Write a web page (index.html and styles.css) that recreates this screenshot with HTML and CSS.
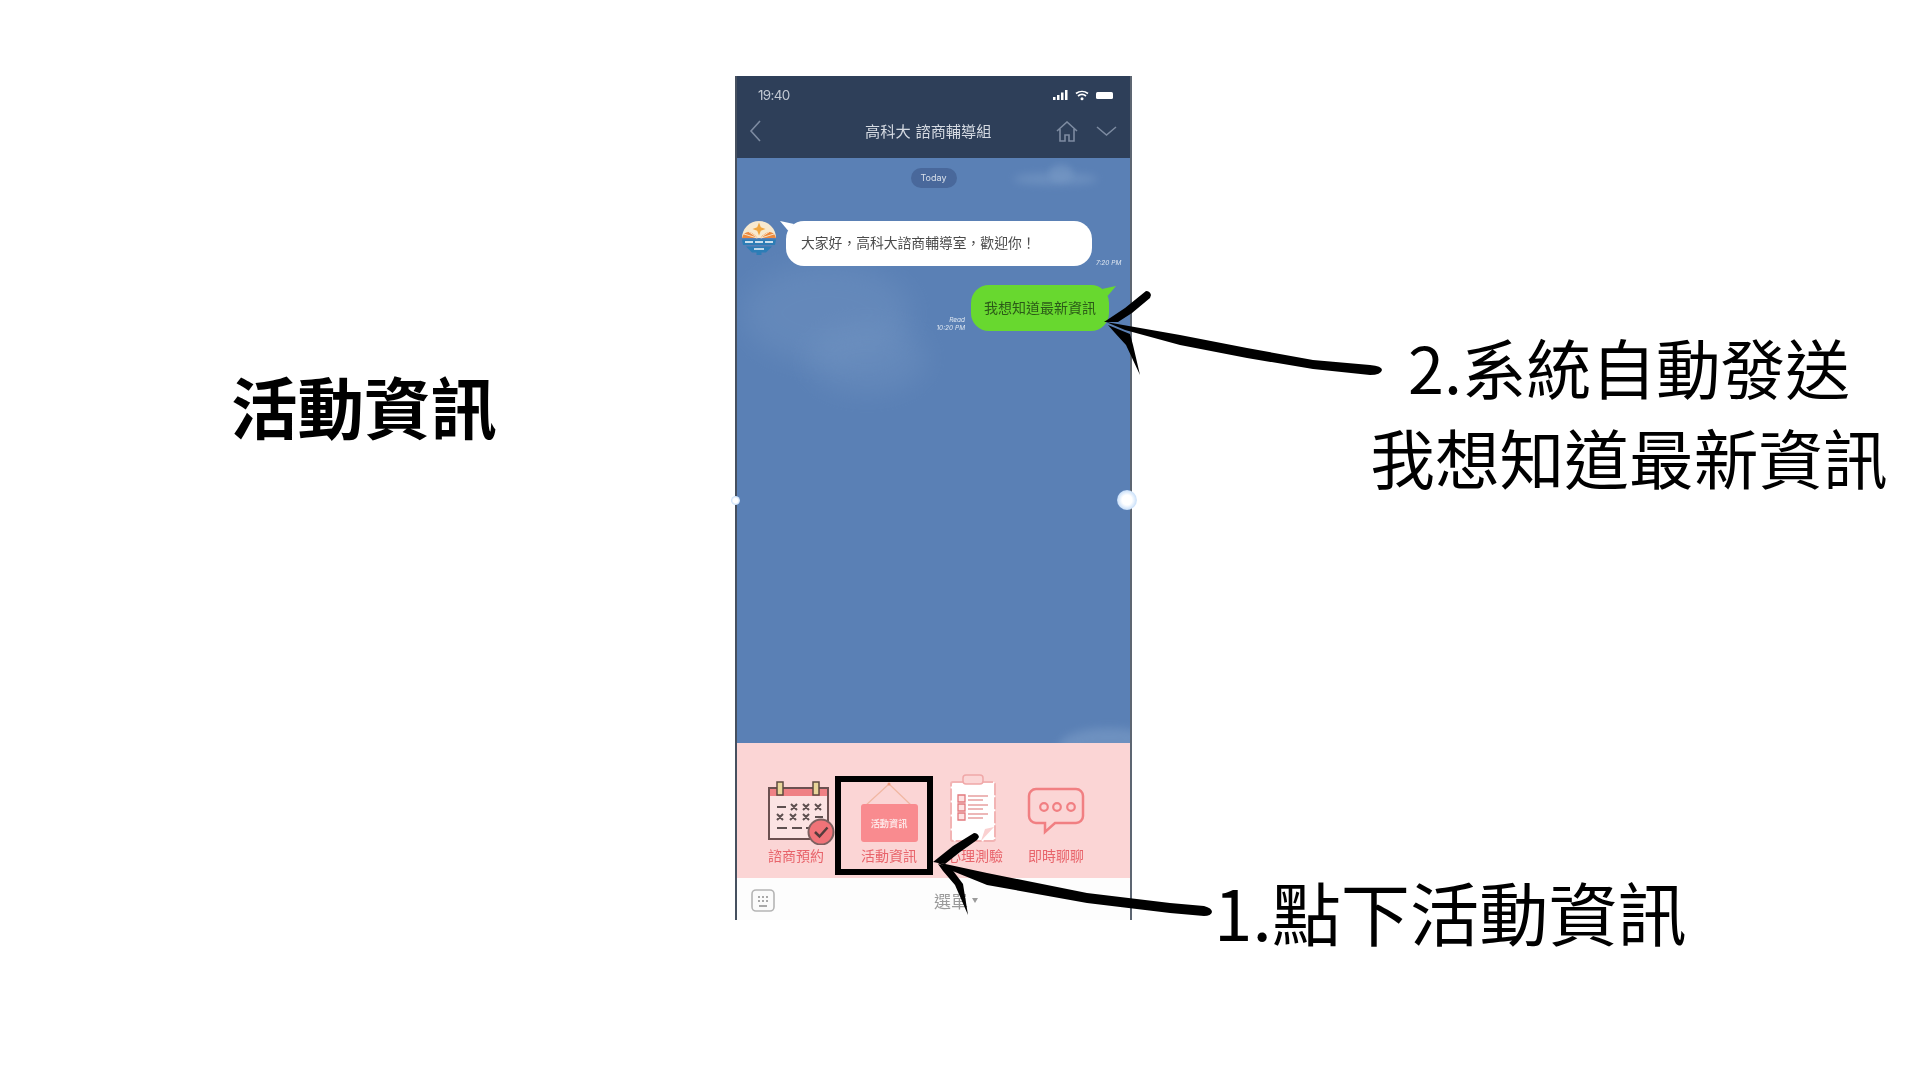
FILE: index.html
```html
<!DOCTYPE html>
<html lang="zh-Hant">
<head>
<meta charset="utf-8">
<title>活動資訊</title>
<link rel="stylesheet" href="styles.css">
</head>
<body>
<main class="slide">
  <h1 class="heading">活動資訊</h1>

  <section class="phone">
    <div class="phone-inner">
      <header class="top">
        <div class="status">
          <span class="clock">19:40</span>
          <svg class="status-icons" width="66" height="12" viewBox="0 0 66 12">
            <g fill="#fff"><rect x="0" y="8" width="2.5" height="3"/><rect x="4" y="6" width="2.5" height="5"/><rect x="8" y="3.5" width="2.5" height="7.5"/><rect x="12" y="1" width="2.5" height="10"/></g>
            <path d="M23 4.500a10 10 0 0 1 12 0M25 7a6.500 6.500 0 0 1 8 0" fill="none" stroke="#fff" stroke-width="1.700"/>
            <circle cx="29" cy="9.800" r="1.500" fill="#fff"/>
            <rect x="43" y="3" width="17" height="7" rx="1.500" fill="#fff"/>
          </svg>
        </div>
        <div class="nav">
          <svg class="nav-back" width="13" height="24" viewBox="0 0 13 24"><path d="M11 2 2 12l9 10" fill="none" stroke="#7d8ba1" stroke-width="1.600"/></svg>
          <span class="nav-title">高科大 諮商輔導組</span>
          <svg class="nav-home" width="22" height="21" viewBox="0 0 22 21"><path d="M1 10 11 1l10 9M4 8v12h5v-6h4v6h5V8" fill="none" stroke="#7d8ba1" stroke-width="1.600"/></svg>
          <svg class="nav-more" width="21" height="11" viewBox="0 0 21 11"><path d="m1 1 9.500 8L20 1" fill="none" stroke="#7d8ba1" stroke-width="1.500"/></svg>
        </div>
      </header>

      <div class="chat">
        <i class="cloud cloud-a"></i><i class="cloud cloud-b"></i><i class="cloud cloud-c"></i><i class="cloud cloud-e"></i><i class="cloud cloud-d"></i>
        <div class="day"><span>Today</span></div>
        <div class="row-in">
          <svg class="avatar" width="36" height="36" viewBox="0 0 36 36">
            <path d="M1 17a17 17 0 0 1 34 0z" fill="#f7e9cf"/>
            <path d="M18 1.500l1.800 4.700 4.700 1.800-4.700 1.800L18 14.500l-1.800-4.700L11.500 8l4.700-1.800z" fill="#f0a63e"/>
            <path d="M1 17C3 9 10 9 16.500 16.500V17zM35 17c-2-8-9-8-15.500-.5V17z" fill="#ee8a3f"/>
            <path d="M3 13l13 4M33 13l-13 4M6 9.500l11 7.500M30 9.500 19 17" stroke="#f9e5c8" stroke-width="1"/>
            <path d="M1 18.500h34l-1 5.500H2z" fill="#2c7db6"/>
            <path d="M4 21h8M14 21h8M24 21h8" stroke="#fff" stroke-width="1.400"/>
            <path d="M5 25.500h26l-6 6H11z" fill="#2c7db6"/>
            <path d="M13 28h10" stroke="#fff" stroke-width="1.400"/>
            <rect x="15.500" y="31" width="5" height="3" fill="#2c7db6"/>
          </svg>
          <div class="bubble bubble-in">大家好，高科大諮商輔導室，歡迎你！</div>
          <span class="time time-in">7:20 PM</span>
        </div>
        <div class="row-out">
          <span class="time time-out">Read<br>10:20 PM</span>
          <div class="bubble bubble-out">我想知道最新資訊</div>
        </div>
      </div>

      <nav class="menu">
        <div class="item">
          <svg class="ico-cal" width="70" height="64" viewBox="0 0 70 64">
            <rect x="3" y="7" width="59" height="51" fill="#fbe3e3" stroke="#6b5050" stroke-width="2"/>
            <rect x="4" y="8" width="57" height="7" fill="#ef8185"/>
            <rect x="11" y="1" width="6" height="13" fill="#e9d69a" stroke="#5d4a40" stroke-width="1.500"/>
            <rect x="47" y="1" width="6" height="13" fill="#e9d69a" stroke="#5d4a40" stroke-width="1.500"/>
            <path d="M11 26h9M25 23l6 6m0-6-6 6M37 23l6 6m0-6-6 6M49 23l6 6m0-6-6 6M11 33l6 6m0-6-6 6M24 33l6 6m0-6-6 6M37 33l6 6m0-6-6 6M49 36h8M11 47h10M26 47h10M40 47h4" stroke="#5e5050" stroke-width="2" fill="none"/>
            <circle cx="55" cy="51" r="12.500" fill="#f07378" stroke="#7d6060" stroke-width="2"/>
            <path d="m49 51 4.500 4.500 8-9" fill="none" stroke="#543c3c" stroke-width="2.500"/>
          </svg>
          <span>諮商預約</span>
        </div>
        <div class="item">
          <svg width="60" height="64" viewBox="0 0 60 64">
            <path d="M30 3 6 25M30 3l23 22" stroke="#f1b7a2" stroke-width="1.200" fill="none"/>
            <circle cx="30" cy="3" r="1.500" fill="#ef9c7e"/>
            <rect x="2" y="23" width="57" height="38" rx="3" fill="#f98b8f"/>
            <text x="30" y="46" text-anchor="middle" class="sign-text">活動資訊</text>
          </svg>
          <span>活動資訊</span>
        </div>
        <div class="item">
          <svg class="ico-clip" width="50" height="72" viewBox="0 0 50 72">
            <rect x="3" y="9" width="44" height="59" rx="2" fill="#fff" stroke="#f2b4b4" stroke-width="2" stroke-dasharray="12 2"/>
            <rect x="15" y="2" width="20" height="9" rx="3" fill="#fbd6d6" stroke="#f0a8a8" stroke-width="1.500"/>
            <path d="M10 22h7v7h-7zM10 31h7v7h-7zM10 40h7v7h-7z" fill="#fde3e3" stroke="#e2797d" stroke-width="1.300"/>
            <path d="M20 23h20M20 27h15M20 32h20M20 36h15M20 41h20M20 45h15" stroke="#e8a0a0" stroke-width="1.300"/>
            <path d="M33 68l13-14-9 2z" fill="#fad1d1"/>
          </svg>
          <span>心理測驗</span>
        </div>
        <div class="item">
          <svg width="58" height="58" viewBox="0 0 58 58">
            <path d="M9 2h40a7 7 0 0 1 7 7v20a7 7 0 0 1-7 7H28L18 45V36H9a7 7 0 0 1-7-7V9a7 7 0 0 1 7-7z" fill="none" stroke="#f17f82" stroke-width="2.500"/>
            <circle cx="17" cy="20" r="3.800" fill="none" stroke="#f17f82" stroke-width="2.200"/>
            <circle cx="30" cy="20" r="3.800" fill="none" stroke="#f17f82" stroke-width="2.200"/>
            <circle cx="44" cy="20" r="3.800" fill="none" stroke="#f17f82" stroke-width="2.200"/>
          </svg>
          <span>即時聊聊</span>
        </div>
      </nav>

      <footer class="bar">
        <svg class="kbd" width="24" height="24" viewBox="0 0 24 24">
          <rect x="1" y="1" width="22" height="21" rx="4" fill="#fbfbfb" stroke="#b5b5b5" stroke-width="1.600"/>
          <path d="M7 8h2M11 8h2M15 8h2M7 12h2M11 12h2M15 12h2M8 17h8" stroke="#8e8e8e" stroke-width="1.500"/>
        </svg>
        <span class="bar-label">選單<i class="caret"></i></span>
      </footer>
    </div>
    <i class="knob knob-l"></i><i class="knob knob-r"></i>
  </section>

  <div class="box"></div>

  <svg class="ink" width="1920" height="1080" viewBox="0 0 1920 1080">
    <path d="M1106 322 1180 335 1247 348 1313 360 1370 365Q1382 366 1382 370 1381 375 1370 375L1313 369 1247 358 1180 345 1125 330Z"/>
    <path d="M1104 322 1125 308 1146 291Q1150 291 1151 295L1150 298 1132 313 1118 322Z"/>
    <path d="M1108 325 1130 334 1133 345 1140 375 1126 345 1115 333Z"/>
    <path d="M936 862 987 873 1087 893 1170 903 1204 906Q1212 908 1212 912 1211 916 1204 916L1170 913 1087 903 987 885 950 870Z"/>
    <path d="M933 862 953 846 974 833Q978 833 979 837L977 840 960 852 945 864Z"/>
    <path d="M938 864 951 868 963 884 968 915 955 885 943 871Z"/>
  </svg>

  <p class="note note-two">2.系統自動發送<br>我想知道最新資訊</p>
  <p class="note note-one">1.點下活動資訊</p>
</main>
</body>
</html>
```

FILE: styles.css
```css
* { box-sizing: border-box; }
html, body { margin: 0; padding: 0; background: #fff; }
body { width: 1920px; height: 1080px; overflow: hidden; font-family: "Noto Sans CJK TC", "Noto Sans", sans-serif; }
.slide { position: relative; width: 1920px; height: 1080px; }

.heading { position: absolute; left: 231px; top: 357px; margin: 0; font-size: 66.500px; line-height: 96px; font-weight: 700; color: #000; }
.note { position: absolute; margin: 0; font-size: 64.700px; color: #000; font-weight: 400; text-align: center; }
.note-two { left: 1369px; top: 321px; width: 520px; line-height: 90px; }
.note-one { left: 1214px; top: 863px; line-height: 96px; white-space: nowrap; font-size: 69.200px; }

.phone { position: absolute; left: 735px; top: 76px; width: 397px; height: 844px; }
.phone-inner { display: flex; flex-direction: column; width: 100%; height: 100%; border-left: 2px solid #46505f; border-right: 2px solid #5d6672; filter: blur(.6px); overflow: hidden; background: #5a80b5; }

.top { flex: none; height: 82px; background: #2e3f59; color: #fff; display: flex; flex-direction: column; padding: 0 12px 0 21px; }
.status { display: flex; align-items: center; justify-content: space-between; height: 36px; padding-top: 2px; }
.clock { font-family: "Inter", sans-serif; font-size: 13.500px; color: #c2c9d3; letter-spacing: -.7px; }
.status-icons { margin-right: -1px; }
.nav { position: relative; display: flex; align-items: center; height: 38px; }
.nav-back { margin-left: -9px; }
.nav-title { position: absolute; left: 107px; top: 7px; font-size: 15.200px; line-height: 22px; color: #d5dae2; white-space: nowrap; word-spacing: 1.500px; }
.nav-home { margin-left: auto; margin-right: 18px; }
.nav-more { margin-right: 1px; }

.chat { flex: none; height: 585px; position: relative; padding-top: 10px; background: #5a80b5; overflow: hidden; }
.cloud { position: absolute; display: block; border-radius: 50%; filter: blur(14px); background: #7b9cc7; }
.cloud-a { left: 5px; top: 105px; width: 170px; height: 100px; opacity: .3; }
.cloud-b { left: 70px; top: 165px; width: 120px; height: 70px; opacity: .3; }
.cloud-c { left: 276px; top: 15px; width: 85px; height: 12px; opacity: .55; filter: blur(4px); }
.cloud-e { left: 312px; top: 6px; width: 24px; height: 18px; opacity: .5; filter: blur(3px); }
.cloud-d { left: 322px; top: 570px; width: 100px; height: 36px; opacity: .6; filter: blur(4px); }

.day { position: relative; display: flex; justify-content: center; }
.day span { display: block; width: 46px; height: 20px; border-radius: 10px; background: #49689b; color: #d9e0ea; font-family: "Inter", sans-serif; font-size: 9px; line-height: 20px; text-align: center; }

.row-in { position: relative; display: flex; align-items: flex-start; margin-top: 33px; padding-left: 4px; }
.avatar { flex: none; }
.bubble { position: relative; font-size: 13.800px; line-height: 20px; white-space: nowrap; }
.bubble-in { width: 306px; height: 45px; margin-left: 9px; padding: 11px 15px; border-radius: 18px; background: #fff; color: #4b4b4b; }
.bubble-in::before { content: ""; position: absolute; left: -6px; top: 0; width: 14px; height: 10px; background: #fff; clip-path: polygon(0 0, 100% 30%, 60% 100%); }
.time { color: #dfe7f1; font-size: 6.500px; line-height: 8px; font-style: italic; font-family: "Inter", sans-serif; text-align: right; }
.time-in { margin-left: 4px; margin-top: 38px; white-space: nowrap; }
.row-out { position: relative; display: flex; align-items: flex-end; justify-content: flex-end; margin-top: 18px; padding-right: 21px; }
.time-out { margin-right: 6px; margin-bottom: -1px; }
.bubble-out { width: 138px; height: 46px; padding: 12px 0 0 13px; border-radius: 18px; background: #68d82f; color: #2b5a18; font-size: 14px; }
.bubble-out::after { content: ""; position: absolute; right: -7px; top: 1px; width: 14px; height: 10px; background: #68d82f; clip-path: polygon(100% 0, 0 30%, 40% 100%); }

.menu { flex: none; height: 135px; background: #fbd5d5; display: grid; grid-template-columns: 90px 96px 76px 86px; align-items: end; padding: 0 0 14px 14px; }
.item { display: flex; flex-direction: column; align-items: center; justify-content: flex-end; gap: 1px; font-size: 14px; line-height: 18px; color: #e8646b; white-space: nowrap; }
.item svg { display: block; }
.ico-cal { margin-left: 10px; }
.ico-clip { margin-right: 4px; }
.sign-text { font-size: 9.200px; font-weight: 700; fill: #fde4e4; font-family: "Noto Sans CJK TC", sans-serif; }

.bar { flex: none; height: 42px; background: #fdfdfd; position: relative; display: flex; align-items: center; justify-content: center; }
.kbd { position: absolute; left: 14px; top: 11px; }
.bar-label { display: flex; align-items: center; gap: 4px; color: #9b9b9b; font-size: 17px; line-height: 24px; margin-left: 45px; margin-top: 3px; }
.caret { display: block; width: 0; height: 0; border-left: 3px solid transparent; border-right: 3px solid transparent; border-top: 5px solid #9b9b9b; }

.knob { position: absolute; border-radius: 50%; background: radial-gradient(circle, #fff 35%, #cfe3fa 65%, rgba(180, 210, 245, 0) 100%); }
.knob-r { right: -5px; top: 414px; width: 20px; height: 20px; }
.knob-l { left: -4px; top: 420px; width: 9px; height: 9px; }

.box { position: absolute; left: 835px; top: 776px; width: 98px; height: 99px; border: 6px solid #000; }
.ink { position: absolute; left: 0; top: 0; pointer-events: none; fill: #000; }
```
